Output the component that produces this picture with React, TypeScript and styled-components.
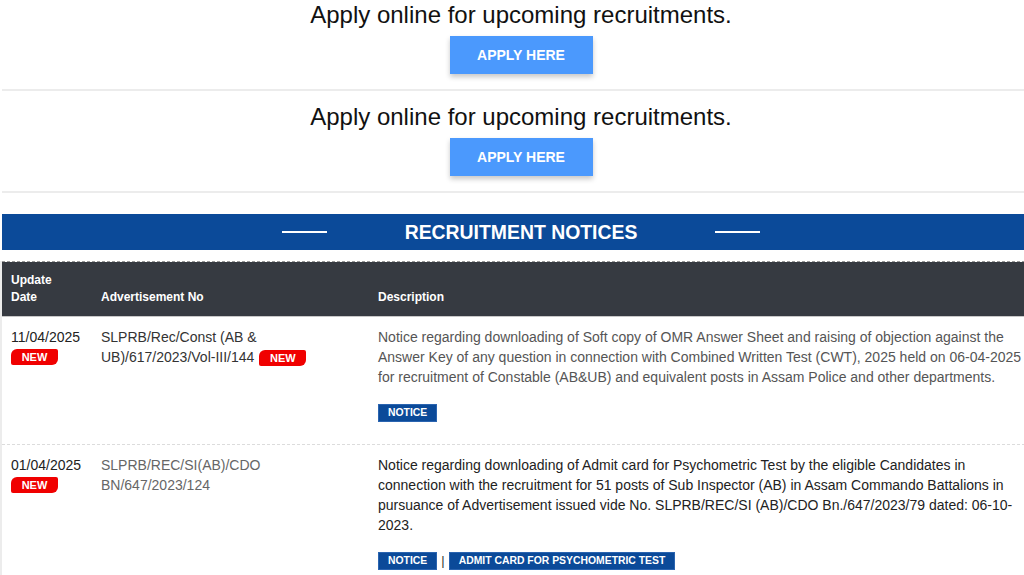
import React from "react";
import styled, { createGlobalStyle } from "styled-components";

const Global = createGlobalStyle`
  html, body {
    margin: 0;
    padding: 0;
    overflow: hidden;
    background: #fff;
  }
  body {
    font-family: "Liberation Sans", Arial, sans-serif;
    color: #222;
  }
`;

const Page = styled.div`
  width: 1040px;
`;

const ApplySection = styled.section<{ $first?: boolean }>`
  margin-left: 2px;
  padding: ${(p) => (p.$first ? "1px" : "12px")} 0 15px;
  border-bottom: 2px solid #ececec;
  display: flex;
  flex-direction: column;
  align-items: center;
`;

const ApplyTitle = styled.h2`
  margin: 0 0 7px;
  font-size: 24px;
  line-height: 28px;
  font-weight: normal;
  color: #111;
`;

const ApplyButton = styled.a`
  display: flex;
  align-items: center;
  justify-content: center;
  width: 143px;
  height: 38px;
  box-sizing: border-box;
  background: #4b99fd;
  color: #fff;
  font-size: 14px;
  font-weight: bold;
  text-decoration: none;
  box-shadow: 0 3px 5px rgba(0, 0, 0, 0.22);
`;

const NoticesBar = styled.div`
  margin: 21px 0 0 2px;
  height: 36px;
  background: #0b4a99;
  display: flex;
  align-items: center;
  justify-content: center;
  gap: 78px;
`;

const BarLine = styled.span`
  width: 45px;
  height: 2px;
  background: #fff;
`;

const BarTitle = styled.h3`
  margin: 0;
  color: #fff;
  font-size: 19.4px;
  font-weight: bold;
`;

const Table = styled.div`
  margin-top: 11px;
  border-left: 2px solid #ececec;
`;

const HeadRow = styled.div`
  display: grid;
  grid-template-columns: 90px 277px 1fr;
  align-items: end;
  background: #363a41;
  background-clip: padding-box;
  border-top: 1px dashed #9a9a9a;
  border-bottom: 1px solid #c8c8c8;
`;

const HeadCell = styled.div`
  padding: 10px 9px 10px;
  color: #fff;
  font-size: 12px;
  font-weight: bold;
  line-height: 17px;
`;

const Row = styled.div`
  display: grid;
  grid-template-columns: 90px 277px 1fr;
  border-bottom: 1px dashed #dcdcdc;
`;

const Cell = styled.div<{ $tone?: string }>`
  padding: 10px 9px 22px;
  font-size: 14px;
  line-height: 20px;
  color: ${(p) => p.$tone || "#222"};
`;

const DateText = styled.div`
  color: #222;
`;

const NewBadge = styled.span<{ $inline?: boolean }>`
  display: inline-block;
  vertical-align: middle;
  margin-left: ${(p) => (p.$inline ? "5px" : "0")};
  width: 47px;
  height: 16px;
  line-height: 16px;
  text-align: center;
  background: #f00000;
  color: #fff;
  font-size: 11px;
  font-weight: bold;
  border-radius: 6px 2px 6px 2px;
`;

const BadgeLine = styled.div`
  display: flex;
  align-items: center;
  height: 20px;
`;

const Actions = styled.div`
  margin-top: 17px;
  display: flex;
  align-items: center;
  gap: 4px;
  color: #333;
  font-size: 13px;
`;

const NoticeButton = styled.a`
  display: inline-flex;
  align-items: center;
  height: 18px;
  padding: 0 9px;
  background: #0b4a99;
  color: #fff;
  font-size: 10.4px;
  font-weight: bold;
  text-decoration: none;
  box-sizing: border-box;
  border: 1px solid #2a64b0;
`;

const Pipe = styled.span`
  line-height: 18px;
`;

type Notice = {
  date: string;
  adv: React.ReactNode;
  advTone: string;
  desc: React.ReactNode;
  descTone: string;
  actions: string[];
};

const notices: Notice[] = [
  {
    date: "11/04/2025",
    adv: (
      <>
        SLPRB/Rec/Const (AB &amp; UB)/617/2023/Vol-III/144
        <NewBadge $inline>NEW</NewBadge>
      </>
    ),
    advTone: "#333",
    desc: (
      <>
        Notice regarding downloading of Soft copy of OMR Answer Sheet and raising of objection against the Answer Key
        of any question in connection with Combined Written Test (CWT), 2025 held on 06-04-2025 for recruitment of
        Constable (AB&amp;UB) and equivalent posts in Assam Police and other departments.
      </>
    ),
    descTone: "#555",
    actions: ["NOTICE"],
  },
  {
    date: "01/04/2025",
    adv: <>SLPRB/REC/SI(AB)/CDO BN/647/2023/124</>,
    advTone: "#666",
    desc: (
      <>
        Notice regarding downloading of Admit card for Psychometric Test by the eligible Candidates in
        <br />
        connection with the recruitment for 51 posts of Sub Inspector (AB) in Assam Commando Battalions in pursuance
        of Advertisement issued vide No. SLPRB/REC/SI (AB)/CDO Bn./647/2023/79 dated: 06-10-2023.
      </>
    ),
    descTone: "#222",
    actions: ["NOTICE", "ADMIT CARD FOR PSYCHOMETRIC TEST"],
  },
];

export default function App() {
  return (
    <Page>
      <Global />
      <ApplySection $first>
        <ApplyTitle>Apply online for upcoming recruitments.</ApplyTitle>
        <ApplyButton href="#">APPLY HERE</ApplyButton>
      </ApplySection>
      <ApplySection>
        <ApplyTitle>Apply online for upcoming recruitments.</ApplyTitle>
        <ApplyButton href="#">APPLY HERE</ApplyButton>
      </ApplySection>

      <NoticesBar>
        <BarLine />
        <BarTitle>RECRUITMENT NOTICES</BarTitle>
        <BarLine />
      </NoticesBar>

      <Table>
        <HeadRow>
          <HeadCell>
            Update
            <br />
            Date
          </HeadCell>
          <HeadCell>Advertisement No</HeadCell>
          <HeadCell>Description</HeadCell>
        </HeadRow>
        {notices.map((n) => (
          <Row key={n.date}>
            <Cell>
              <DateText>{n.date}</DateText>
              <BadgeLine>
                <NewBadge>NEW</NewBadge>
              </BadgeLine>
            </Cell>
            <Cell $tone={n.advTone}>{n.adv}</Cell>
            <Cell $tone={n.descTone}>
              <div>{n.desc}</div>
              <Actions>
                {n.actions.map((a, i) => (
                  <React.Fragment key={a}>
                    {i > 0 && <Pipe>|</Pipe>}
                    <NoticeButton href="#">{a}</NoticeButton>
                  </React.Fragment>
                ))}
              </Actions>
            </Cell>
          </Row>
        ))}
      </Table>
    </Page>
  );
}
